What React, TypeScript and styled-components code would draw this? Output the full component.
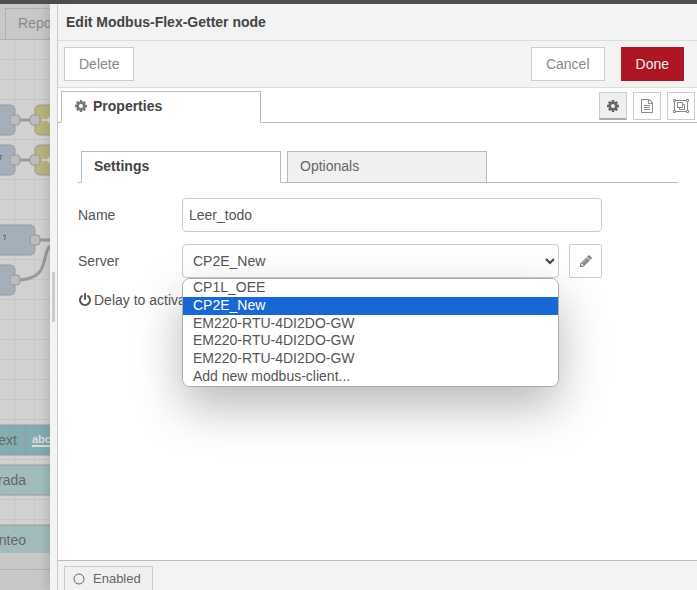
import React from "react";
import styled, { createGlobalStyle, css } from "styled-components";

const GlobalStyle = createGlobalStyle`
  *, *::before, *::after { box-sizing: border-box; }
  html, body { margin: 0; height: 100%; overflow: hidden; }
  body, button, input, select {
    font-family: "Liberation Sans", Arial, sans-serif;
    font-size: 14px;
    line-height: 20px;
    color: #555;
  }
  #root { height: 100%; }
`;

/* ---------- icons ---------- */

const paths = {
  cog: "M1152 896q0-106-75-181t-181-75-181 75-75 181 75 181 181 75 181-75 75-181zm512-109v222q0 12-8 23t-20 13l-185 28q-19 54-39 91 35 50 107 138 10 12 10 25t-9 23q-27 37-99 108t-94 71q-12 0-26-9l-138-108q-44 23-91 38-16 136-29 186-7 28-36 28h-222q-14 0-24.500-8.500t-11.500-21.500l-28-184q-49-16-90-37l-141 107q-10 9-25 9-14 0-25-11-126-114-165-168-7-10-7-23 0-12 8-23 15-21 51-66.500t54-70.500q-27-50-41-99l-183-27q-13-2-21-12.500t-8-23.500v-222q0-12 8-23t19-13l186-28q14-46 39-92-40-57-107-138-10-12-10-24 0-10 9-23 26-36 98.500-107.500t94.500-71.500q13 0 26 10l138 107q44-23 91-38 16-136 29-186 7-28 36-28h222q14 0 24.500 8.500t11.500 21.500l28 184q49 16 90 37l142-107q9-9 24-9 13 0 25 10 129 119 165 170 7 8 7 22 0 12-8 23-15 21-51 66.500t-54 70.500q26 50 41 98l183 28q13 2 21 12.500t8 23.500z",
  pencil:
    "M491 1536l91-91-235-235-91 91v107h128v128h107zm523-928q0-22-22-22-10 0-17 7l-542 542q-7 7-7 17 0 22 22 22 10 0 17-7l542-542q7-7 7-17zm-54-192l416 416-832 832h-416v-416zm683 96q0 53-37 90l-166 166-416-416 166-165q36-38 90-38 53 0 91 38l235 234q37 39 37 91z",
  fileText:
    "M1596 380q28 28 48 76t20 88v1152q0 40-28 68t-68 28h-1344q-40 0-68-28t-28-68v-1600q0-40 28-68t68-28h896q40 0 88 20t76 48zm-444-244v376h376q-10-29-22-41l-313-313q-12-12-41-22zm384 1528v-1024h-416q-40 0-68-28t-28-68v-416h-768v1536h1280zm-1024-864q0-14 9-23t23-9h704q14 0 23 9t9 23v64q0 14-9 23t-23 9h-704q-14 0-23-9t-9-23v-64zm736 224q14 0 23 9t9 23v64q0 14-9 23t-23 9h-704q-14 0-23-9t-9-23v-64q0-14 9-23t23-9h704zm0 256q14 0 23 9t9 23v64q0 14-9 23t-23 9h-704q-14 0-23-9t-9-23v-64q0-14 9-23t23-9h704z",
  power:
    "M1664 896q0 156-61 298t-164 245-245 164-298 61-298-61-245-164-164-245-61-298q0-182 80.500-343t226.500-270q43-32 95.500-25t83.500 50q32 42 24.500 94.500t-49.500 84.500q-98 74-151.500 181t-53.500 228q0 104 40.500 198.500t109.500 163.500 163.500 109.500 198.500 40.500 198.500-40.500 163.500-109.500 109.500-163.500 40.500-198.500q0-121-53.500-228t-151.500-181q-42-32-49.500-84.500t24.500-94.500q31-43 84-50t95 25q146 109 226.500 270t80.500 343zm-640-768v640q0 52-38 90t-90 38-90-38-38-90v-640q0-52 38-90t90-38 90 38 38 90z",
};

const Glyph = styled.svg`
  display: block;
  flex: none;
  fill: currentColor;
`;

const Icon = ({ name, size = 14 }: { name: keyof typeof paths; size?: number }) => (
  <Glyph width={size} height={size} viewBox="0 0 1792 1792" aria-hidden="true">
    <path d={paths[name]} />
  </Glyph>
);

const GroupIcon = () => (
  <Glyph width={16} height={14} viewBox="0 0 16 14" aria-hidden="true">
    <g fill="none" stroke="currentColor">
      <path d="M3 1.500H13M3 12.500H13M1.500 3V11M14.500 3V11" />
      <path d="M.5.5h2v2h-2zM13.500.5h2v2h-2zM.5 11.500h2v2h-2zM13.500 11.500h2v2h-2z" />
      <path d="M4.500 3.500h5v5h-5z" />
      <path d="M9.500 5.500h2v5h-5v-2" />
    </g>
  </Glyph>
);

/* ---------- page frame ---------- */

const Page = styled.div`
  display: flex;
  flex-direction: column;
  height: 100vh;
  overflow: hidden;
  background: #fff;
`;

const TopBar = styled.div`
  flex: none;
  height: 4px;
  background: #4f4f4f;
`;

const Body = styled.div`
  flex: 1;
  min-height: 0;
  display: flex;
`;

const Workspace = styled.aside`
  flex: none;
  width: 50px;
  display: flex;
  flex-direction: column;
  overflow: hidden;
  background: #c8c8c8;
`;

const FlowTabs = styled.div`
  flex: none;
  height: 36px;
  padding: 4px 0 0 5px;
  border-bottom: 1px solid #b0b0b0;
  overflow: hidden;
`;

const FlowTab = styled.button`
  height: 32px;
  width: 120px;
  padding: 0 12px 2px;
  border: 1px solid #b0b0b0;
  background: #c8c8c8;
  color: #888;
  text-align: left;
`;

const Canvas = styled.svg`
  display: block;
  flex: 1;
  min-height: 0;
  width: 50px;
  background: #d1d1d1;
`;

const StatusBar = styled.div`
  flex: none;
  height: 37px;
  padding-top: 16px;
  &::before {
    content: "";
    display: block;
    border-top: 1px solid #b0b0b0;
  }
`;

const Separator = styled.div`
  flex: none;
  width: 7px;
  display: flex;
  align-items: center;
  justify-content: center;
  background: #f3f3f3;
  box-shadow: 0 0 12px rgba(0, 0, 0, 0.25);
  z-index: 1;
`;

const Grip = styled.div`
  width: 3px;
  height: 50px;
  background: #ccc;
`;

const Tray = styled.section`
  flex: 1;
  min-width: 0;
  display: flex;
  flex-direction: column;
  overflow: hidden;
  border-left: 1px solid #ccc;
  background: #fff;
  z-index: 2;
`;

const Title = styled.h1`
  flex: none;
  margin: 0;
  padding: 8px;
  border-bottom: 1px solid #ddd;
  background: #f3f3f3;
  color: #444;
  font-size: 14px;
  line-height: 20px;
  font-weight: 700;
`;

const Toolbar = styled.div`
  flex: none;
  display: flex;
  align-items: center;
  gap: 16px;
  padding: 6px 13px 6px 6px;
  border-bottom: 1px solid #ddd;
  background: #f3f3f3;
`;

const Spacer = styled.div`
  flex: 1;
  margin-right: -16px;
`;

const Button = styled.button<{ $primary?: boolean }>`
  height: 34px;
  padding: 0 14px;
  border: 1px solid ${(p) => (p.$primary ? "#ad1625" : "#ccc")};
  background: ${(p) => (p.$primary ? "#ad1625" : "#fff")};
  color: ${(p) => (p.$primary ? "#eee" : "#888")};
`;

/* ---------- tabs ---------- */

const TabStrip = styled.div`
  flex: none;
  display: flex;
  align-items: flex-end;
  gap: 6px;
  height: 35px;
  padding-left: 3px;
  box-shadow: inset 0 -1px #bbb;
`;

const Tab = styled.button<{ $active?: boolean }>`
  display: flex;
  align-items: center;
  gap: 5px;
  width: 200px;
  height: 32px;
  padding: 0 12px 2px;
  border: 1px solid #bbb;
  background: #f0f0f0;
  color: #666;
  ${(p) =>
    p.$active &&
    css`
      border-bottom-color: #fff;
      background: #fff;
      color: #444;
      font-weight: 700;
    `}
  svg {
    color: #777;
  }
`;

const TabActions = styled.div`
  display: flex;
  align-self: flex-start;
  gap: 6px;
  margin-left: auto;
  padding: 4px 2px 0 0;
`;

const IconButton = styled.button<{ $active?: boolean }>`
  display: flex;
  align-items: center;
  justify-content: center;
  width: 28px;
  height: 28px;
  padding: 0;
  border: 1px solid #ccc;
  background: #fff;
  color: #888;
  ${(p) =>
    p.$active &&
    css`
      border-bottom: 2px solid #aaa;
      background: #efefef;
      color: #666;
    `}
`;

/* ---------- form ---------- */

const Form = styled.form`
  flex: 1;
  min-height: 0;
  display: flex;
  flex-direction: column;
  padding: 25px 19px 0 20px;
`;

const Fields = styled.div`
  display: flex;
  flex-direction: column;
  gap: 12px;
  width: 524px;
  max-width: 100%;
  padding-top: 15px;
`;

const Row = styled.div`
  display: flex;
  align-items: center;
`;

const Label = styled.label`
  flex: none;
  width: 104px;
`;

const DelayLabel = styled.div`
  display: flex;
  align-items: center;
  gap: 2px;
  white-space: nowrap;
`;

const field = css`
  width: 100%;
  height: 34px;
  border: 1px solid #ccc;
  border-radius: 4px;
  background: #fff;
  color: #555;
  outline: none;
`;

const TextInput = styled.input`
  ${field}
  flex: 1;
  min-width: 0;
  padding: 0 6px;
`;

const SelectWrap = styled.div`
  position: relative;
  flex: 1;
  min-width: 0;
  margin-right: 10px;
`;

const Select = styled.select`
  ${field}
  display: block;
  padding: 0 10px;
  appearance: none;
`;

const Chevron = styled.svg`
  position: absolute;
  right: 4px;
  top: 13px;
  fill: none;
  stroke: #444;
  stroke-width: 2;
  pointer-events: none;
`;

const Options = styled.ul`
  position: absolute;
  z-index: 5;
  top: 100%;
  left: 0;
  right: 0;
  height: 109px;
  display: flex;
  flex-direction: column;
  margin: 0;
  padding: 0;
  list-style: none;
  overflow: hidden;
  border: 1px solid #aaa;
  border-radius: 8px;
  background: #fff;
  box-shadow: 0 20px 48px rgba(0, 0, 0, 0.28);
`;

const Option = styled.li<{ $selected: boolean }>`
  flex: 1;
  padding: 0 10px;
  line-height: 17px;
  background: ${(p) => (p.$selected ? "#1967d2" : "#fff")};
  color: ${(p) => (p.$selected ? "#fff" : "#555")};
`;

const EditButton = styled(IconButton)`
  width: 33px;
  height: 34px;
  border-radius: 2px;
`;

const Footer = styled.footer`
  flex: none;
  height: 30px;
  padding: 5px 6px 0;
  border-top: 1px solid #bbb;
  background: #f3f3f3;
  overflow: hidden;
`;

const Toggle = styled.button`
  display: flex;
  align-items: center;
  gap: 8px;
  height: 28px;
  padding: 0 11px 2px 8px;
  border: 1px solid #ccc;
  background: #f0f0f0;
  color: #666;
  font-size: 13px;
`;

/* ---------- flow canvas ---------- */

const NodeText = styled.text`
  font-size: 14px;
  fill: #666;
`;

const Port = ({ x, y }: { x: number; y: number }) => (
  <rect x={x - 5} y={y - 5} width="10" height="10" rx="3" fill="#bbb" stroke="#999" />
);

const FlowCanvas = () => (
  <Canvas viewBox="0 40 50 513" preserveAspectRatio="xMinYMin slice" aria-label="Flow">
    <g stroke="#c6c6c6">
      {[14.5, 34.5].map((x) => (
        <path key={x} d={`M${x} 40V553`} />
      ))}
      {Array.from({ length: 25 }, (_, i) => (
        <path key={i} d={`M0 ${59.5 + i * 20}H50`} />
      ))}
    </g>
    <g fill="none" stroke="#999" strokeWidth="3">
      <path d="M15 120H35M15 160H35M35 240H50" />
      <path d="M15 280C52 280 40 256 50 246" />
    </g>
    <g stroke="#999">
      <rect x="-60" y="105" width="75" height="30" rx="5" fill="#a3afbb" />
      <rect x="-60" y="145" width="75" height="30" rx="5" fill="#a3afbb" />
      <rect x="-60" y="225" width="95" height="30" rx="5" fill="#a3afbb" />
      <rect x="-60" y="265" width="75" height="30" rx="5" fill="#a3afbb" />
      <rect x="35" y="105" width="60" height="30" rx="5" fill="#b9b581" />
      <rect x="35" y="145" width="60" height="30" rx="5" fill="#b9b581" />
    </g>
    <path d="M42 120H50M42 160H50" stroke="#d4d4d4" strokeWidth="2" />
    <path d="M46 120L50 116V124ZM46 160L50 156V164Z" fill="#d4d4d4" />
    <Port x={15} y={120} />
    <Port x={35} y={120} />
    <Port x={15} y={160} />
    <Port x={35} y={160} />
    <Port x={35} y={240} />
    <Port x={15} y={280} />
    <path d="M-1 155.500H1.500L0 160M3 235.500H5.500L4.500 240" fill="none" stroke="#666" />
    <g stroke="#999">
      <rect x="-60" y="425" width="140" height="30" fill="#83adb1" />
      <path d="M25.500 425V455" />
      <rect x="-60" y="465" width="140" height="30" fill="#a2bcbe" />
      <rect x="-60" y="525" width="140" height="40" fill="#a2bcbe" />
    </g>
    <NodeText x="17" y="445" textAnchor="end">ext</NodeText>
    <NodeText x="26" y="485" textAnchor="end">rada</NodeText>
    <NodeText x="26" y="545" textAnchor="end">nteo</NodeText>
    <text x="32" y="443" fontSize="11" fontWeight="700" fill="#ddd">abc</text>
    <path d="M32 446H50" stroke="#ddd" strokeWidth="2" />
  </Canvas>
);

const servers = [
  "CP1L_OEE",
  "CP2E_New",
  "EM220-RTU-4DI2DO-GW",
  "EM220-RTU-4DI2DO-GW",
  "EM220-RTU-4DI2DO-GW",
  "Add new modbus-client...",
];

export default function App() {
  const [selected, setSelected] = React.useState(1);
  return (
    <Page>
      <GlobalStyle />
      <TopBar />
      <Body>
        <Workspace>
          <FlowTabs>
            <FlowTab type="button">Repo</FlowTab>
          </FlowTabs>
          <FlowCanvas />
          <StatusBar />
        </Workspace>
        <Separator>
          <Grip />
        </Separator>
        <Tray>
          <Title>Edit Modbus-Flex-Getter node</Title>
          <Toolbar>
            <Button type="button">Delete</Button>
            <Spacer />
            <Button type="button">Cancel</Button>
            <Button type="button" $primary>Done</Button>
          </Toolbar>
          <TabStrip>
            <Tab type="button" $active>
              <Icon name="cog" />
              Properties
            </Tab>
            <TabActions>
              <IconButton type="button" $active aria-label="Properties">
                <Icon name="cog" />
              </IconButton>
              <IconButton type="button" aria-label="Description">
                <Icon name="fileText" />
              </IconButton>
              <IconButton type="button" aria-label="Appearance">
                <GroupIcon />
              </IconButton>
            </TabActions>
          </TabStrip>
          <Form onSubmit={(e) => e.preventDefault()}>
            <TabStrip>
              <Tab type="button" $active>Settings</Tab>
              <Tab type="button">Optionals</Tab>
            </TabStrip>
            <Fields>
              <Row>
                <Label htmlFor="node-name">Name</Label>
                <TextInput id="node-name" defaultValue="Leer_todo" />
              </Row>
              <Row>
                <Label htmlFor="node-server">Server</Label>
                <SelectWrap>
                  <Select
                    id="node-server"
                    value={selected}
                    onChange={(e) => setSelected(Number(e.target.value))}
                  >
                    {servers.map((s, i) => (
                      <option key={i} value={i}>{s}</option>
                    ))}
                  </Select>
                  <Chevron width="10" height="8" viewBox="0 0 10 8" aria-hidden="true">
                    <path d="M1 2L5 6L9 2" />
                  </Chevron>
                  <Options role="listbox" aria-label="Server">
                    {servers.map((s, i) => (
                      <Option
                        key={i}
                        role="option"
                        aria-selected={i === selected}
                        $selected={i === selected}
                        onClick={() => setSelected(i)}
                      >
                        {s}
                      </Option>
                    ))}
                  </Options>
                </SelectWrap>
                <EditButton type="button" aria-label="Edit server">
                  <Icon name="pencil" />
                </EditButton>
              </Row>
              <DelayLabel>
                <Icon name="power" />
                Delay to activa
              </DelayLabel>
            </Fields>
          </Form>
          <Footer>
            <Toggle type="button">
              <Glyph width="12" height="12" viewBox="0 0 12 12" aria-hidden="true">
                <circle cx="6" cy="6" r="5" fill="none" stroke="currentColor" />
              </Glyph>
              Enabled
            </Toggle>
          </Footer>
        </Tray>
      </Body>
    </Page>
  );
}
